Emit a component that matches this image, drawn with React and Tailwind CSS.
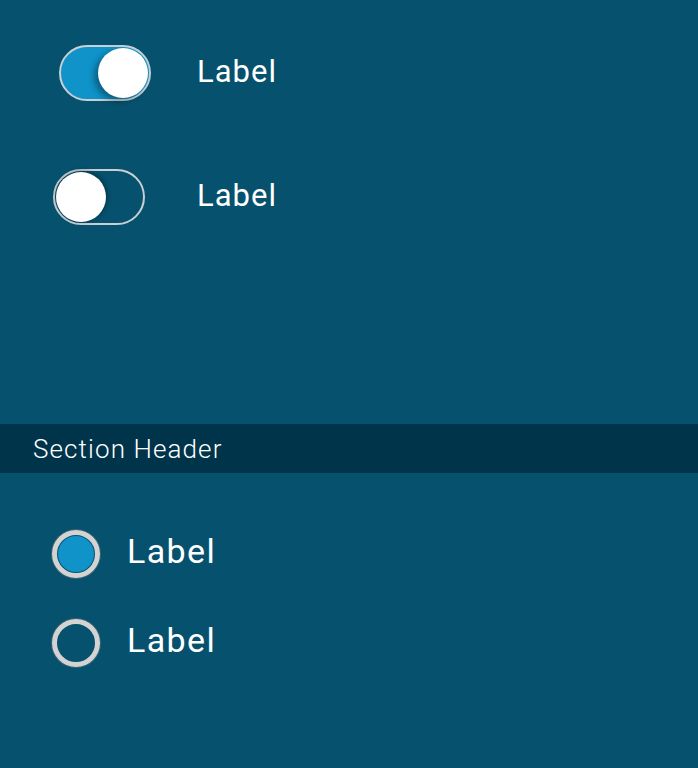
import React from "react";

const font = { fontFamily: "Roboto, 'Open Sans', sans-serif" };

const Toggle = ({ on }) => (
    <div className={`relative w-[92px] h-[56px] rounded-full border-2 border-[#c9cfd3] ${on ? "bg-[#0f93c9]" : "bg-transparent"}`}>
        <div
            className={`absolute top-[1px] w-[50px] h-[50px] rounded-full bg-white ${on ? "right-[1px] shadow-[-4px_3px_6px_rgba(0,0,0,0.35)]" : "left-[1px] shadow-[1px_-1px_5px_rgba(0,0,0,0.4)]"}`}
        />
    </div>
);

const Radio = ({ checked }) => (
    <div className="w-[48px] h-[48px] rounded-full border-[5px] border-[#d3d3d3] shadow-[0_0_0_1px_rgba(120,120,120,0.5)] flex items-center justify-center">
        {checked && <div className="w-[36px] h-[36px] rounded-full bg-[#0f93c9]" />}
    </div>
);

export default function App() {
    return (
        <div className="w-[698px] h-[768px] bg-[#06516e] text-white flex flex-col" style={font}>
            {/* Toggles */}
            <div className="flex flex-col pt-[45px] gap-[68px] h-[424px]">
                <div className="flex items-center">
                    <div className="w-[197px] pl-[59px]">
                        <Toggle on />
                    </div>
                    <span className="text-[31px] tracking-[1px] leading-none -mt-[3px]">Label</span>
                </div>
                <div className="flex items-center">
                    <div className="w-[197px] pl-[53px]">
                        <Toggle />
                    </div>
                    <span className="text-[31px] tracking-[1px] leading-none -mt-[3px]">Label</span>
                </div>
            </div>

            {/* Section header */}
            <div className="h-[49px] bg-[#00344a] flex items-center pl-[33px]">
                <span className="text-[26px] font-light tracking-[1.1px] leading-none">Section Header</span>
            </div>

            {/* Radios */}
            <div className="flex flex-col pt-[57px] gap-[41px] pl-[52px]">
                <div className="flex items-center gap-[27px]">
                    <Radio checked />
                    <span className="text-[34px] tracking-[1.4px] leading-none -mt-[6px]">Label</span>
                </div>
                <div className="flex items-center gap-[27px]">
                    <Radio />
                    <span className="text-[34px] tracking-[1.4px] leading-none -mt-[6px]">Label</span>
                </div>
            </div>
        </div>
    );
}
